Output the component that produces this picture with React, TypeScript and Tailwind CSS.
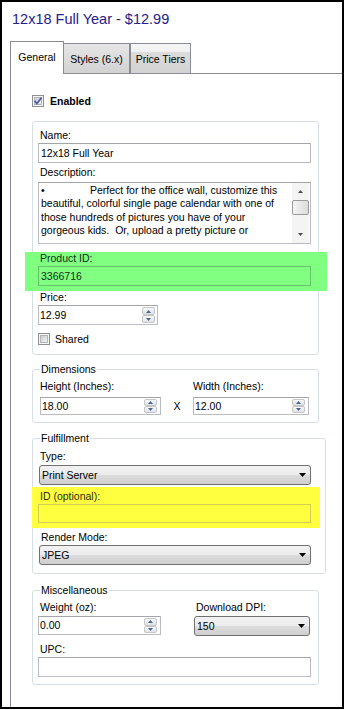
import React from "react";

function Tri({ up, color = "#4a6496", w = 5, h = 3 }: { up?: boolean; color?: string; w?: number; h?: number }) {
  return (
    <svg width={w} height={h} viewBox={`0 0 ${w} ${h}`}>
      {up ? (
        <polygon points={`0,${h} ${w},${h} ${w / 2},0`} fill={color} />
      ) : (
        <polygon points={`0,0 ${w},0 ${w / 2},${h}`} fill={color} />
      )}
    </svg>
  );
}

function SpinButtons({ mr }: { mr: string }) {
  return (
    <div className={`flex w-[13px] flex-col py-[1px] ${mr}`}>
      <div className="flex flex-1 items-center justify-center rounded-[2px] border border-[#c4c6ca] bg-[linear-gradient(#f7f7f7,#e1e3e6)]">
        <Tri up />
      </div>
      <div className="flex flex-1 items-center justify-center rounded-[2px] border border-[#c4c6ca] bg-[linear-gradient(#f7f7f7,#e1e3e6)]">
        <Tri />
      </div>
    </div>
  );
}

function SpinInput({ value, cls, mr = "mr-[1px]" }: { value: string; cls: string; mr?: string }) {
  return (
    <div className={`flex border border-[#b9bbc0] border-t-[#a3a5ab] bg-white ${cls}`}>
      <div className="flex flex-1 items-center pl-[1px] leading-[13px]">{value}</div>
      <SpinButtons mr={mr} />
    </div>
  );
}

function TextInput({ value = "", cls }: { value?: string; cls: string }) {
  return <div className={`flex items-center pl-[2px] leading-[13px] ${cls}`}>{value}</div>;
}

function Select({ value, cls }: { value: string; cls: string }) {
  return (
    <div
      className={`flex items-center justify-between rounded-[3px] border border-[#707070] bg-[linear-gradient(#f2f2f2_0%,#ebebeb_50%,#dddddd_50%,#cfcfcf_100%)] pl-[2px] pr-[4px] ${cls}`}
    >
      <span className="leading-[13px]">{value}</span>
      <Tri color="#000" w={7} h={4} />
    </div>
  );
}

function CheckBox({ checked, id }: { checked?: boolean; id: string }) {
  return (
    <svg width="12" height="12" viewBox="0 0 12 12" className="shrink-0">
      <defs>
        <linearGradient id={id} x1="0" y1="0" x2="1" y2="1">
          <stop offset="0" stopColor="#c8c9cb" />
          <stop offset="1" stopColor="#f6f6f6" />
        </linearGradient>
      </defs>
      <rect x="0.5" y="0.5" width="11" height="11" fill="#f5f5f5" stroke="#8e8f8f" />
      <rect x="2.5" y="2.5" width="7" height="7" fill={`url(#${id})`} stroke="#b3b5b8" />
      {checked && <path d="M2.6 5.8 L4.9 8.6 L9.6 2.4" stroke="#4a5ea6" strokeWidth="1.7" fill="none" />}
    </svg>
  );
}

const label = "h-[13px] leading-[13px] whitespace-nowrap";
const inputBorder = "border border-[#b9bbc0] border-t-[#a3a5ab] bg-white";
const group = "w-[287px] rounded-[3px] border border-[#d5dfe5] px-[5px]";

export default function App() {
  return (
    <div className="flex h-[709px] w-[344px] flex-col overflow-hidden border-2 border-black bg-white font-['Liberation_Sans',Arial,sans-serif] text-[10.5px] text-black">
      <div className="flex h-[35px] items-center pl-[10px] text-[14.5px] text-[#25208c]">12x18 Full Year - $12.99</div>

      <div className="ml-[8px] mt-[4px] flex h-[33px] items-end">
        <div className="flex h-[33px] w-[54px] items-center justify-center border-l border-r border-t border-[#898c95] bg-white">
          General
        </div>
        <div className="flex h-[31px] w-[66px] items-center justify-center border-b border-r border-t border-[#898c95] bg-[linear-gradient(#e6e6e6,#d2d2d2)] pt-[2px]">
          Styles (6.x)
        </div>
        <div className="flex h-[31px] w-[61px] items-center justify-center border border-[#898c95] bg-[linear-gradient(#f6f6f6_0%,#f0f0f0_27%,#dcdcdc_29%,#d2d2d2_100%)] pt-[2px]">
          Price Tiers
        </div>
        <div className="h-full flex-1 border-b border-[#898c95]" />
      </div>

      <div className="ml-[8px] flex flex-1 flex-col items-start border-l border-[#898c95] pl-[21px]">
        <div className="mt-[21px] flex h-[12px] items-center gap-[6px]">
          <CheckBox checked id="cb-enabled" />
          <span className="font-bold leading-[13px]">Enabled</span>
        </div>

        <div className={`${group} mt-[14px] pb-[9px] pt-[7px]`}>
          <div className={`${label} pl-[2px]`}>Name:</div>
          <TextInput value="12x18 Full Year" cls={`mt-[1px] h-[20px] w-[273px] ${inputBorder}`} />
          <div className={`${label} mt-[3px] pl-[2px]`}>Description:</div>
          <div className={`mt-[3px] flex h-[62px] w-[273px] ${inputBorder}`}>
            <div className="flex-1 pl-[2px] pt-[1px] leading-[13.3px] whitespace-pre">
              <div>
                <span className="inline-block w-[49px]">•</span>Perfect for the office wall, customize this
              </div>
              <div>beautiful, colorful single page calendar with one of</div>
              <div>those hundreds of pictures you have of your</div>
              <div>gorgeous kids.  Or, upload a pretty picture or</div>
            </div>
            <div className="mr-[1px] flex w-[17px] flex-col bg-[#f4f4f4]">
              <div className="flex h-[17px] items-center justify-center">
                <Tri up color="#4d4d4d" w={5} h={3} />
              </div>
              <div className="h-[15px] rounded-[2px] border border-[#9a9a9a] bg-[linear-gradient(90deg,#f4f4f4,#dcdcdc)]" />
              <div className="flex-1" />
              <div className="flex h-[17px] items-center justify-center">
                <Tri color="#4d4d4d" w={5} h={3} />
              </div>
            </div>
          </div>

          <div className="-ml-[13px] mt-[8px] w-[302px] bg-[#80ff80] pb-[5px] pl-[13px] text-[#12301a]">
            <div className={`${label} pl-[2px]`}>Product ID:</div>
            <TextInput value="3366716" cls="mt-[1px] h-[20px] w-[273px] border border-[#66c46a]" />
          </div>

          <div className={`${label} pl-[2px]`}>Price:</div>
          <SpinInput value="12.99" cls="mt-[1px] h-[20px] w-[120px]" mr="mr-[2px]" />
          <div className="mt-[8px] flex h-[12px] items-center gap-[5px]">
            <CheckBox id="cb-shared" />
            <span className="leading-[13px]">Shared</span>
          </div>
        </div>

        <fieldset className={`${group} mt-[8px] pb-[7px]`}>
          <legend className="ml-[2px] px-[1px] leading-[13px]">Dimensions</legend>
          <div className="mt-[4px] flex items-end pl-[2px]">
            <div className="flex w-[121px] flex-col">
              <div className={label}>Height (Inches):</div>
              <SpinInput value="18.00" cls="mt-[4px] h-[18px] w-[121px]" mr="mr-[3px]" />
            </div>
            <div className="flex h-[18px] w-[32px] items-center justify-center leading-[13px]">X</div>
            <div className="flex w-[116px] flex-col">
              <div className={label}>Width (Inches):</div>
              <SpinInput value="12.00" cls="mt-[4px] h-[18px] w-[116px]" mr="mr-[3px]" />
            </div>
          </div>
        </fieldset>

        <fieldset className={`${group} mt-[9px] pb-[8px]`}>
          <legend className="ml-[2px] px-[1px] leading-[13px]">Fulfillment</legend>
          <div className={`${label} mt-[5px] pl-[2px]`}>Type:</div>
          <Select value="Print Server" cls="ml-[1px] mt-[2px] h-[20px] w-[272px]" />
          <div className="-ml-[6px] mt-[2px] w-[288px] bg-[#ffff40] pb-[5px] pl-[6px] pt-[3px] text-[#2c2c10]">
            <div className={`${label} pl-[2px]`}>ID (optional):</div>
            <TextInput cls="mt-[1px] h-[19px] w-[273px] border border-[#cfcf52]" />
          </div>
          <div className={`${label} mt-[3px] pl-[3px]`}>Render Mode:</div>
          <Select value="JPEG" cls="ml-[1px] mt-[1px] h-[20px] w-[272px]" />
        </fieldset>

        <fieldset className={`${group} mt-[10px] pb-[7px]`}>
          <legend className="ml-[2px] px-[1px] leading-[13px]">Miscellaneous</legend>
          <div className="mt-[4px] flex">
            <div className="flex w-[123px] flex-col">
              <div className={`${label} pl-[2px]`}>Weight (oz):</div>
              <SpinInput value="0.00" cls="mt-[2px] h-[19px] w-[123px]" mr="mr-[3px]" />
            </div>
            <div className="ml-[33px] flex w-[116px] flex-col">
              <div className={`${label} pl-[2px]`}>Download DPI:</div>
              <Select value="150" cls="mt-[2px] h-[20px] w-[116px]" />
            </div>
          </div>
          <div className={`${label} mt-[7px] pl-[2px]`}>UPC:</div>
          <TextInput cls={`mt-[1px] h-[20px] w-[273px] ${inputBorder}`} />
        </fieldset>
      </div>
    </div>
  );
}
